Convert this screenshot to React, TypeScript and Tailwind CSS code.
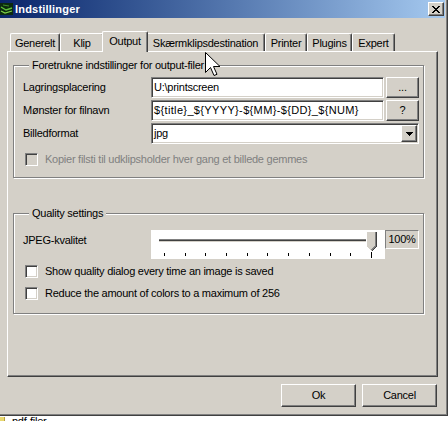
import React from "react";

const raised =
  "border border-t-white border-l-white border-r-[#404040] border-b-[#404040] shadow-[inset_-1px_-1px_0_#808080]";
const sunken =
  "border border-t-[#808080] border-l-[#808080] border-r-white border-b-white shadow-[inset_1px_1px_0_#404040,inset_-1px_-1px_0_#d4d0c8]";

type Tab = { label: string; w: string; active?: boolean };

const tabs: Tab[] = [
  { label: "Generelt", w: "w-[50px]" },
  { label: "Klip", w: "w-[44px]" },
  { label: "Output", w: "w-[46px]", active: true },
  { label: "Skærmklipsdestination", w: "w-[119px]" },
  { label: "Printer", w: "w-[42px]" },
  { label: "Plugins", w: "w-[45px]" },
  { label: "Expert", w: "w-[43px]" },
];

function TabButton({ tab }: { tab: Tab }) {
  if (tab.active) {
    return (
      <div
        className={`${tab.w} h-[21px] -mb-px -mx-[2px] relative z-10 bg-[#d4d0c8] border-t border-l border-r border-t-white border-l-white border-r-[#404040] shadow-[inset_-1px_0_0_#808080] rounded-t-[2px] flex justify-center pt-[3px] leading-[13px]`}
      >
        {tab.label}
      </div>
    );
  }
  return (
    <div
      className={`${tab.w} h-[18px] border-t border-l border-r border-t-white border-l-white border-r-[#404040] shadow-[inset_-1px_0_0_#808080] rounded-t-[2px] flex justify-center pt-[3px] leading-[13px]`}
    >
      {tab.label}
    </div>
  );
}

function CheckBox({ disabled }: { disabled?: boolean }) {
  return (
    <div
      className={`w-[13px] h-[13px] shrink-0 ${sunken} ${disabled ? "bg-[#d4d0c8]" : "bg-white"}`}
    />
  );
}

function Group({ title, children, className }: { title: string; children: React.ReactNode; className?: string }) {
  return (
    <fieldset
      className={`w-[411px] border border-[#808080] shadow-[1px_1px_0_#ffffff,inset_1px_1px_0_#ffffff] px-0 ${className ?? ""}`}
    >
      <legend className="ml-[6px] px-[3px] leading-[13px] bg-[#d4d0c8]">{title}</legend>
      {children}
    </fieldset>
  );
}

function Slider() {
  const ticks = [13, 34, 54, 75, 96, 116, 137, 158, 179, 199];
  return (
    <div className="w-[234px] h-[29px] bg-white">
      <svg width="234" height="29" className="block" shapeRendering="crispEdges">
        <rect x="8" y="9" width="217" height="1" fill="#808080" />
        <rect x="8" y="10" width="217" height="1" fill="#404040" />
        <rect x="8" y="11" width="217" height="1" fill="#d4d0c8" />
        {ticks.map((x) => (
          <rect key={x} x={x} y="23" width="1" height="3" fill="#000" />
        ))}
        <rect x="220" y="22" width="1" height="6" fill="#000" />
        {/* thumb */}
        <polygon points="215,1 226,1 226,16 221,21 220,21 215,16" fill="#d4d0c8" />
        <polyline points="215.5,16 215.5,1.5 225.5,1.5" fill="none" stroke="#ffffff" />
        <polyline points="225.5,1.5 225.5,16.5 220.5,21.5" fill="none" stroke="#404040" />
        <polyline points="224.5,2 224.5,16 220.5,20" fill="none" stroke="#808080" />
        <line x1="215.5" y1="16.5" x2="219.5" y2="20.5" stroke="#ffffff" />
      </svg>
    </div>
  );
}

export default function App() {
  return (
    <div className="w-[448px] h-[421px] overflow-hidden bg-white relative font-['Liberation_Sans',Arial,sans-serif] text-[11px] text-black tracking-[-0.25px]">
      <div className="w-[448px] h-[416px] flex flex-col bg-[#d4d0c8] border-r border-b border-[#404040] shadow-[inset_-1px_-1px_0_#808080]">
        {/* title bar */}
        <div className="w-[445px] h-[18px] shrink-0 flex items-center bg-gradient-to-r from-[#0a246a] to-[#a6caf0]">
          <svg width="14" height="14" viewBox="0 0 14 14" className="ml-0 mr-[1px] shrink-0">
            <rect x="0" y="1" width="13" height="12" fill="#0c2a10" />
            <path d="M1 5 L6 8 L12 6" stroke="#5fbf3a" strokeWidth="1.4" fill="none" />
            <path d="M1 9 L5 11 L12 9" stroke="#7fd34a" strokeWidth="1.2" fill="none" />
            <path d="M3 3 L9 4" stroke="#3f8f2a" strokeWidth="1" fill="none" />
          </svg>
          <span className="text-white font-bold tracking-[0.2px] leading-[13px]">Indstillinger</span>
          <div className={`ml-auto mr-[1px] w-[16px] h-[14px] bg-[#d4d0c8] flex items-center justify-center ${raised}`}>
            <svg width="8" height="7" viewBox="0 0 8 7" shapeRendering="crispEdges">
              <path d="M0 0h2v1h-2zM6 0h2v1h-2zM1 1h2v1h-2zM5 1h2v1h-2zM2 2h4v1h-4zM3 3h2v1h-2zM2 4h4v1h-4zM1 5h2v1h-2zM5 5h2v1h-2zM0 6h2v1h-2zM6 6h2v1h-2z" fill="#000" />
            </svg>
          </div>
        </div>

        {/* tab strip */}
        <div className="mt-[13px] ml-[10px] h-[20px] flex items-end">
          {tabs.map((t) => (
            <TabButton key={t.label} tab={t} />
          ))}
        </div>

        {/* tab page */}
        <div className="ml-[7px] w-[431px] h-[326px] shrink-0 border border-t-white border-l-white border-r-[#404040] border-b-[#404040] shadow-[inset_-1px_-1px_0_#808080] pt-[7px] pl-[5px]">
          <Group title="Foretrukne indstillinger for output-filer" className="pt-[5px] pl-[9px] pb-[11px]">
            <div className="flex flex-col gap-[2px]">
              <div className="flex items-center h-[21px]">
                <div className="w-[128px]">Lagringsplacering</div>
                <div className={`w-[233px] h-[21px] bg-white flex items-center px-[2px] ${sunken}`}>U:\printscreen</div>
                <div className={`ml-[2px] w-[33px] h-[21px] flex items-center justify-center ${raised}`}>...</div>
              </div>
              <div className="flex items-center h-[21px]">
                <div className="w-[128px]">Mønster for filnavn</div>
                <div className={`w-[233px] h-[21px] bg-white flex items-center px-[2px] tracking-[0.35px] ${sunken}`}>
                  {"${title}_${YYYY}-${MM}-${DD}_${NUM}"}
                </div>
                <div className={`ml-[2px] w-[33px] h-[21px] flex items-center justify-center ${raised}`}>?</div>
              </div>
              <div className="flex items-center h-[21px]">
                <div className="w-[128px]">Billedformat</div>
                <div className={`w-[268px] h-[21px] bg-white flex items-center pl-[2px] pr-[1px] ${sunken}`}>
                  <span className="flex-1">jpg</span>
                  <div className={`w-[16px] h-[17px] bg-[#d4d0c8] flex items-center justify-center ${raised}`}>
                    <svg width="7" height="4" viewBox="0 0 7 4" shapeRendering="crispEdges">
                      <path d="M0 0h7v1h-7zM1 1h5v1h-5zM2 2h3v1h-3zM3 3h1v1h-1z" fill="#000" />
                    </svg>
                  </div>
                </div>
              </div>
            </div>
            <div className="mt-[9px] ml-[2px] flex items-center h-[13px] gap-[7px] text-[#808080]">
              <CheckBox disabled />
              <span>Kopier filsti til udklipsholder hver gang et billede gemmes</span>
            </div>
          </Group>

          <Group title="Quality settings" className="mt-[29px] pt-[10px] pl-[9px] pb-[13px]">
            <div className="flex items-start">
              <div className="w-[128px] h-[20px] flex items-center">JPEG-kvalitet</div>
              <Slider />
              <div className="w-[34px] h-[19px] border border-t-[#808080] border-l-[#808080] border-r-white border-b-white flex items-center justify-center">
                100%
              </div>
            </div>
            <div className="mt-[6px] ml-[2px] flex items-center h-[13px] gap-[7px]">
              <CheckBox />
              <span>Show quality dialog every time an image is saved</span>
            </div>
            <div className="mt-[9px] ml-[2px] flex items-center h-[13px] gap-[7px]">
              <CheckBox />
              <span>Reduce the amount of colors to a maximum of 256</span>
            </div>
          </Group>
        </div>

        {/* dialog buttons */}
        <div className="mt-[7px] w-[437px] flex justify-end gap-[6px]">
          <div className={`w-[75px] h-[23px] flex items-center justify-center ${raised}`}>Ok</div>
          <div className={`w-[75px] h-[23px] flex items-center justify-center ${raised}`}>Cancel</div>
        </div>
      </div>

      {/* list underneath the dialog */}
      <div className="h-[5px] overflow-hidden flex items-start">
        <div className="w-[5px] h-[5px] mt-[1px] bg-[#e8d870] border-r border-[#b8a040]" />
        <span className="ml-[7px] -mt-[1px] leading-[13px] text-[#000]">pdf-filer</span>
      </div>

      {/* mouse pointer */}
      <svg width="16" height="25" viewBox="0 0 16 25" className="absolute left-[205px] top-[52px]">
        <path d="M0.5 0.5 L0.5 20.5 L5.5 15.5 L9 23.5 L12 22.3 L8.5 14.5 L15 14.5 Z" fill="#fff" stroke="#000" strokeWidth="1" strokeLinejoin="miter" />
      </svg>
    </div>
  );
}
